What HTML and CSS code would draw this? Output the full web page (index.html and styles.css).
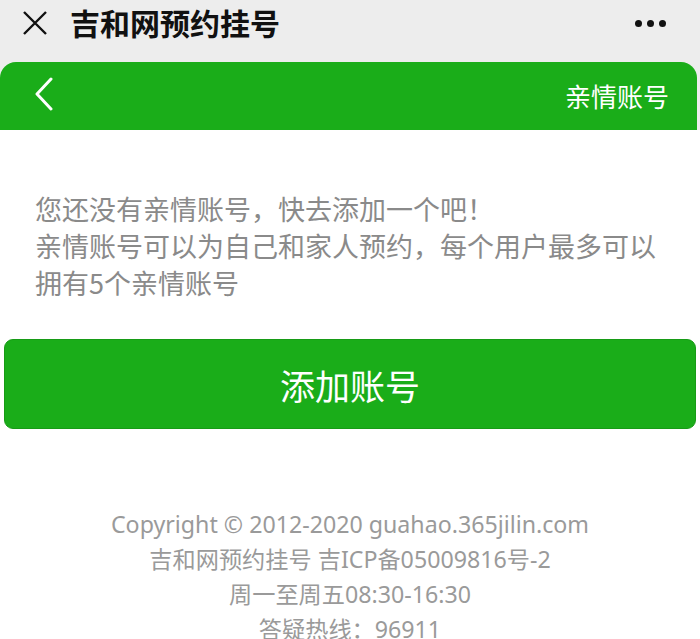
FILE: index.html
```html
<!DOCTYPE html>
<html lang="zh-CN">
<head>
<meta charset="utf-8">
<title>吉和网预约挂号</title>
<link rel="stylesheet" href="styles.css">
</head>
<body>
<div class="topbar">
  <svg class="close" width="26" height="26" viewBox="0 0 26 26"><path d="M2 2 L24 24 M24 2 L2 24" stroke="#111" stroke-width="2.4" fill="none"/></svg>
  <div class="title">吉和网预约挂号</div>
  <div class="more"><span></span><span></span><span></span></div>
</div>
<div class="page">
  <div class="header">
    <svg class="back" width="20" height="34" viewBox="0 0 20 34"><path d="M17 2 L3 17 L17 32" stroke="#fff" stroke-width="3" fill="none" stroke-linecap="round" stroke-linejoin="round"/></svg>
    <div class="htitle">亲情账号</div>
  </div>
  <div class="content">
    <p class="tip">您还没有亲情账号，快去添加一个吧！<br>亲情账号可以为自己和家人预约，每个用户最多可以拥有5个亲情账号</p>
  </div>
  <div class="btnwrap"><div class="btn">添加账号</div></div>
  <div class="footer">
    <div>Copyright © 2012-2020 guahao.365jilin.com</div>
    <div>吉和网预约挂号 吉ICP备05009816号-2</div>
    <div>周一至周五08:30-16:30</div>
    <div>答疑热线：96911</div>
  </div>
</div>
</body>
</html>
```
FILE: styles.css
```css
html, body { margin: 0; padding: 0; }
body {
  background: #ffffff;
  font-family: "Noto Sans", "Noto Sans CJK SC", sans-serif;
  width: 700px;
  height: 639px;
  overflow: hidden;
}
.topbar {
  height: 62px;
  background: #ededed;
  display: flex;
  align-items: center;
  padding: 0 34px 16px 22px;
  box-sizing: border-box;
}
.close { flex: none; }
.title {
  margin-left: 22px;
  font-size: 30px;
  font-weight: bold;
  color: #111;
  flex: 1;
  margin-top: -2px;
  font-family: "Noto Sans CJK SC", sans-serif;
}
.more { display: flex; gap: 5px; }
.more span { width: 7px; height: 7px; border-radius: 50%; background: #111; }
.page { background: #ededed; }
.header {
  height: 68px;
  background: #1aad19;
  border-radius: 16px 16px 0 0;
  margin-right: 3px;
  display: flex;
  align-items: center;
  justify-content: space-between;
  padding: 0 28px 0 34px;
  box-sizing: border-box;
}
.back { margin-top: -4px; }
.htitle { color: #fff; font-size: 26px; font-family: "Noto Sans CJK SC", sans-serif; margin-top: -2px; }
.content { background: #fff; padding: 60px 20px 0 35px; }
.tip {
  margin: 0;
  font-size: 27px;
  line-height: 37px;
  color: #8a8a8a;
  font-family: "Noto Sans CJK SC", sans-serif;
}
.btnwrap { background: #fff; padding: 38px 4px 0 4px; }
.btn {
  height: 88px;
  background: #1aad19;
  border: 1px solid #179b16;
  border-radius: 9px;
  display: flex;
  align-items: center;
  justify-content: center;
  color: #fff;
  font-size: 35px;
  font-family: "Noto Sans CJK SC", sans-serif;
}
.footer {
  background: #fff;
  padding-top: 78px;
  text-align: center;
  color: #9a9a9a;
  font-size: 23.2px;
  line-height: 35px;
  height: 300px;
  font-family: "Noto Sans", "Noto Sans CJK SC", sans-serif;
}
```
